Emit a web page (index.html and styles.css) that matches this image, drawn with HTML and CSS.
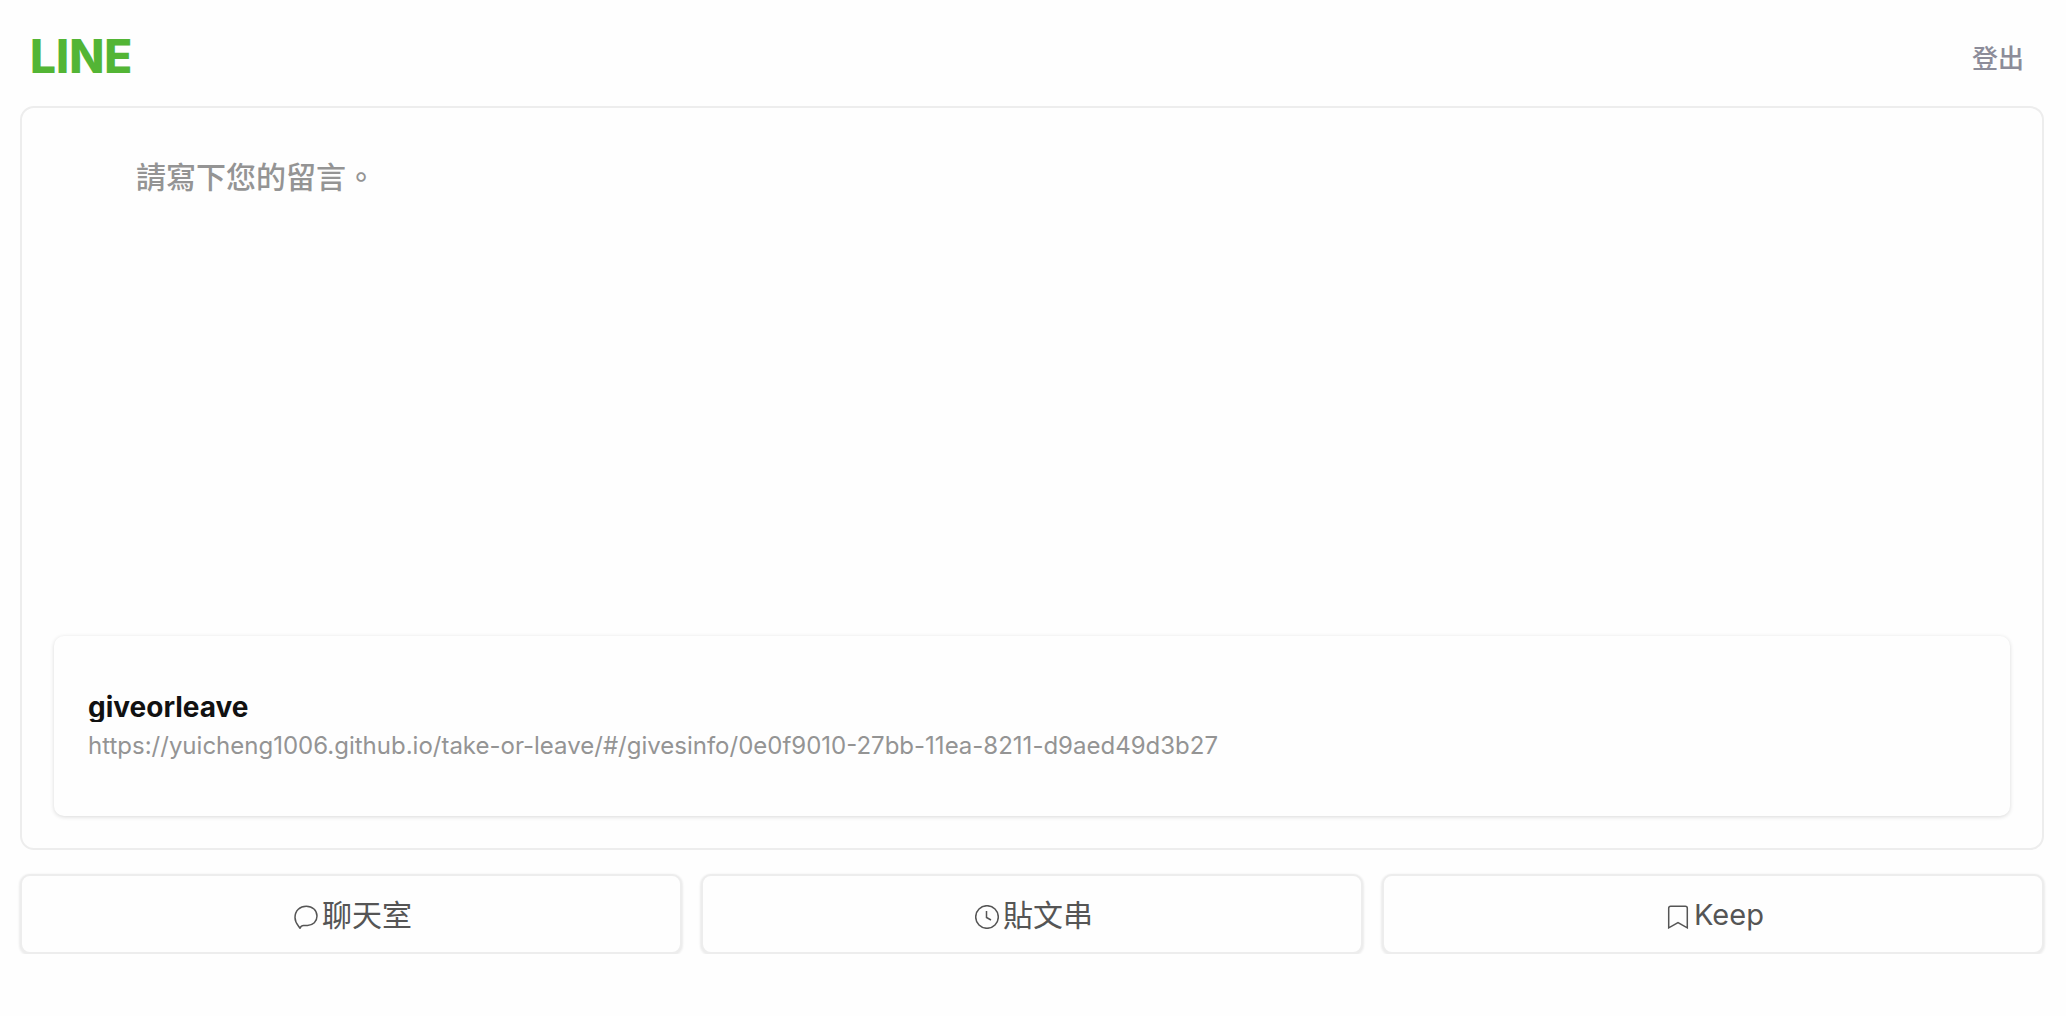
FILE: index.html
```
<!DOCTYPE html>
<html lang="zh-Hant">
<head>
  <meta charset="UTF-8">
  <meta name="viewport" content="width=device-width, initial-scale=1.0">
  <title>LINE</title>
  <link rel="stylesheet" href="styles.css">
</head>

<body>
  <header class="header">
    <h1 class="logo">LINE</h1>
    <button type="button" class="logout">登出</button>
  </header>

  <main>
    <div class="share-box">
      <textarea class="message" aria-label="留言" placeholder="請寫下您的留言。"></textarea>
      <a class="preview" href="https://yuicheng1006.github.io/take-or-leave/#/givesinfo/0e0f9010-27bb-11ea-8211-d9aed49d3b27">
        <strong class="preview-title">giveorleave</strong>
        <span class="preview-url">https://yuicheng1006.github.io/take-or-leave/#/givesinfo/0e0f9010-27bb-11ea-8211-d9aed49d3b27</span>
      </a>
    </div>

    <div class="targets">
      <button type="button" class="target">
        <svg class="icon" viewBox="0 0 24 24" aria-hidden="true">
          <path d="M6 23.2C5 21 1 18.500 1 12.500C1 5.500 6 1.200 12.300 1.200C18.500 1.200 23 5.300 23 11C23 16.500 19 20.400 13.500 20.400H9.500C7.600 20.400 6.700 21.500 6 23.200Z"/>
        </svg>
        <span>聊天室</span>
      </button>
      <button type="button" class="target">
        <svg class="icon" viewBox="0 0 24 24" aria-hidden="true">
          <circle cx="12" cy="12" r="11.300"/>
          <path d="M11.500 6V12.500L16 15"/>
        </svg>
        <span>貼文串</span>
      </button>
      <button type="button" class="target">
        <svg class="icon" viewBox="0 0 24 24" aria-hidden="true">
          <path d="M2.700 22.800V3.200Q2.700 1.200 4.700 1.200H19.300Q21.300 1.200 21.300 3.200V22.800L12 17.500Z"/>
        </svg>
        <span class="latin">Keep</span>
      </button>
    </div>
  </main>
</body>
</html>
```
FILE: styles.css
```
* {
  box-sizing: border-box;
}

body {
  margin: 0;
  padding: 0 22px 0 20px;
  font-family: Inter, "Noto Sans CJK TC", sans-serif;
  background-color: #fefefe;
}

button {
  font-family: inherit;
  cursor: pointer;
}

.header {
  display: flex;
  justify-content: space-between;
  align-items: center;
  height: 106px;
  padding: 6px 20px 0 10px;
}

.logo {
  margin: 0;
  font-size: 46px;
  font-weight: 800;
  line-height: 48px;
  color: #53b535;
}

.logout {
  padding: 6px 0 0;
  border: 0;
  background: none;
  font-size: 26px;
  font-weight: 500;
  line-height: 40px;
  color: #8c8c99;
}

.share-box {
  padding: 32px;
  border: 2px solid #ededed;
  border-radius: 14px;
}

.message {
  display: block;
  width: 100%;
  height: 496px;
  padding: 15px 82px;
  border: 0;
  outline: 0;
  resize: none;
  background: none;
  font-family: inherit;
  font-size: 30px;
  font-weight: 500;
  line-height: 44px;
  color: #444;
}

.message::placeholder {
  color: #949494;
}

.preview {
  display: flex;
  flex-direction: column;
  justify-content: center;
  gap: 10px;
  height: 180px;
  padding: 0 34px;
  border-radius: 10px;
  box-shadow: 0 1px 4px rgba(0, 0, 0, 0.15);
  text-decoration: none;
}

.preview-title,
.preview-url {
  overflow: hidden;
  white-space: nowrap;
  text-overflow: ellipsis;
}

.preview-title {
  font-size: 28px;
  line-height: 30px;
  color: #111;
}

.preview-url {
  font-size: 24px;
  line-height: 28px;
  color: #949494;
}

.targets {
  display: flex;
  gap: 19px;
  margin-top: 24px;
}

.target {
  display: flex;
  flex: 1;
  justify-content: center;
  align-items: center;
  gap: 4px;
  height: 80px;
  padding: 2px 0 0 4px;
  border: 2px solid #ededed;
  border-radius: 10px;
  box-shadow: 0 1px 2px 1px #ededed;
  background-color: #fefefe;
  font-size: 30px;
  line-height: 44px;
  color: #555;
}

.latin {
  font-size: 29px;
}

.icon {
  width: 24px;
  height: 24px;
  margin-top: 4px;
  fill: none;
  stroke: #555;
  stroke-width: 1.5;
}
```
